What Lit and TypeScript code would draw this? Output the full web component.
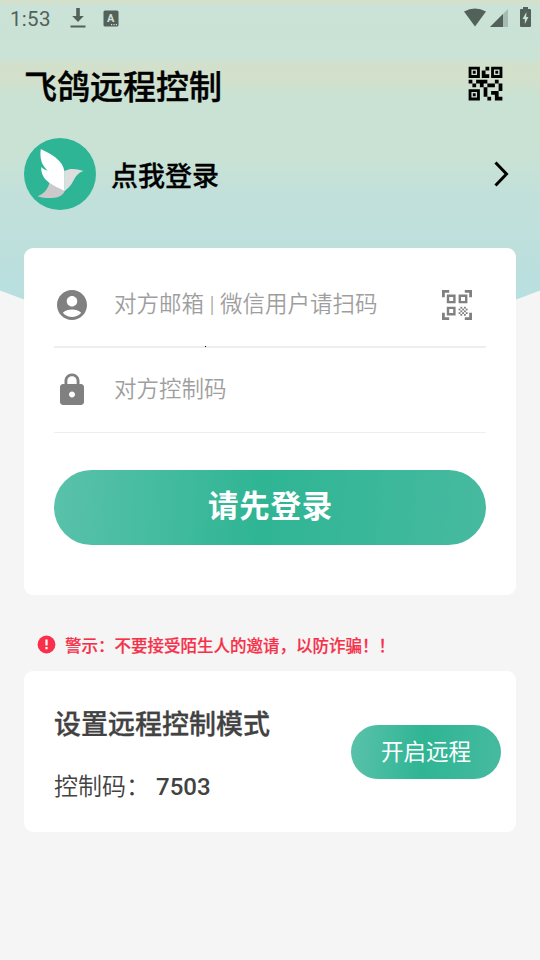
import { LitElement, html, css, svg } from "lit";
import { customElement } from "lit/decorators.js";

const hatch = ["01010", "10101", "01010", "10101", "01010"];

const qrIcon = html`<svg class="qr" viewBox="0 0 24 24">
  <path d="M15 21h-2v-2h2v2zm-2-7h-2v5h2v-5zm8-2h-2v4h2v-4zm-2-2h-2v2h2v-2zM7 12H5v2h2v-2zm-2-2H3v2h2v-2zm7-5h2V3h-2v2zm-7.5-.5v3h3v-3h-3zM9 9H3V3h6v6zm-4.5 7.5v3h3v-3h-3zM9 21H3v-6h6v6zm7.5-16.5v3h3v-3h-3zM21 9h-6V3h6v6zm-2 10v-3h-4v2h2v3h4v-2h-2zm-2-7h-4v2h4v-2zm-4-2H7v2h2v2h2v-2h2v-2zm1-1V7h-2V5h-2v4h4zM6.75 5.25h-1.5v1.5h1.5v-1.5zm0 12h-1.5v1.5h1.5v-1.5zm12-12h-1.5v1.5h1.5v-1.5z"/>
</svg>`;

const scanIcon = html`<svg class="scan" viewBox="0 0 30 30">
  <path class="line thick" d="M1.4 7.2V1.4H7.2M22.8 1.4H28.6V7.2M28.6 22.8V28.6H22.8M7.2 28.6H1.4V22.8"/>
  <path class="line" d="M6 5.7h6.4v6.4H6zM17.8 5.7h6.4v6.4h-6.4zM6 17.9h6.4v6.4H6z"/>
  ${svg`${hatch.flatMap((row, y) =>
    [...row].map((c, x) =>
      c === "1" ? svg`<rect x=${16.6 + x * 1.8} y=${16.8 + y * 1.8} width="1.8" height="1.8"/>` : null
    )
  )}`}
</svg>`;

@customElement("app-root")
export class AppRoot extends LitElement {
  static styles = css`
    :host {
      display: block;
      font-family: Roboto, "Noto Sans CJK SC", sans-serif;
      color: #000;
    }
    * { box-sizing: border-box; }
    svg { display: block; flex: none; }
    .page {
      position: relative;
      height: 960px;
      overflow: hidden;
      background: #f5f5f5;
      display: flex;
      flex-direction: column;
      padding: 0 24px;
      isolation: isolate;
    }
    .page::before {
      content: "";
      position: absolute;
      inset: 0 0 auto;
      height: 345px;
      z-index: -1;
      clip-path: circle(735px at 50% -393px);
      background: linear-gradient(180deg, #d4e0cb 0, #d3e0cc 4px, #cae2d7 5px, #cbe2d6 60px,
        #d3e0cb 63px, #d2e0cc 80px, #cae2d3 96px, #c9e2d4 155px, #c2e0da 195px, #bfe0dc 235px, #b8dfe0 300px);
    }
    .status {
      height: 36px;
      margin: 0 -24px;
      padding: 0 9.5px 0 10px;
      display: flex;
      align-items: center;
      color: #52615a;
      fill: #52615a;
    }
    .clock { font-size: 20.5px; line-height: 36px; width: 60px; padding-top: 2px; letter-spacing: .3px; }
    .spacer { flex: 1; }
    .download { width: 16px; height: 22px; margin: 0 17px 0 0; }
    .wifi { width: 22px; height: 19px; margin: -2px 4px 0 0; }
    .signal { width: 18px; height: 19px; margin: 0 12px 0 0; }
    .battery { width: 11px; height: 20px; margin-top: -2px; }
    .glyph { font: 700 11px Roboto, sans-serif; fill: #cfe2d8; }
    .titlebar {
      height: 48px;
      margin-top: 23px;
      display: flex;
      align-items: center;
      justify-content: space-between;
      padding-right: 8px;
    }
    .title { font-size: 33px; font-weight: 500; margin: 0; line-height: 48px; padding-top: 10px; -webkit-text-stroke: .4px; }
    .qr { width: 45px; height: 45px; }
    .login {
      height: 72px;
      margin-top: 31px;
      display: flex;
      align-items: center;
      padding-right: 6px;
    }
    .avatar { width: 72px; height: 72px; margin-right: 15px; }
    .login-text { font-size: 27px; font-weight: 500; flex: 1; line-height: 40px; padding-top: 5px; -webkit-text-stroke: .3px; }
    .chevron { width: 18px; height: 28px; }
    .card { background: #fff; border-radius: 9px; }
    .connect { margin-top: 37.5px; height: 347px; padding: 14.500px 30px 0; position: relative; }
    .field {
      height: 86px;
      border-bottom: 2px solid #eee;
      display: flex;
      align-items: center;
      color: #9e9e9e;
      font-size: 22.5px;
      font-weight: 350;
      padding-top: 1px;
    }
    .field + .field { border-bottom-width: 1px; height: 85px; padding-top: 0; }
    .field > span { flex: 1; padding-left: 24px; white-space: nowrap; padding-bottom: 6px; }
    .field + .field > span { padding-bottom: 6px; }
    .mark { width: 36px; height: 36px; fill: #808080; }
    .scan { width: 30px; height: 30px; margin-right: 14px; fill: #808080; }
    .line { fill: none; stroke: #808080; stroke-width: 2.4; }
    .thick { stroke-width: 2.8; }
    .speck { position: absolute; left: 181px; top: 98.500px; width: 1px; height: 1px; background: #000; }
    .pill {
      border: 0;
      font-family: inherit;
      color: #fff;
      display: block;
      background: linear-gradient(95deg, #5ac2aa 0%, #2fb594 48%, #34b697 60%, #47baa0 100%);
    }
    .primary {
      width: 432px;
      height: 75px;
      border-radius: 38px;
      margin-top: 37px;
      font-size: 30.5px;
      letter-spacing: .8px;
      font-weight: 700;
      padding: 0 0 7px 1px;
    }
    .warning {
      padding: 24px 0 0 13px;
      display: flex;
      align-items: center;
      height: 76.5px;
      color: #f5314a;
      font-size: 16.5px;
      font-weight: 500;
      white-space: nowrap;
      -webkit-text-stroke: .2px;
    }
    .alert { width: 19px; height: 19px; margin: -1px 9px 0 0; fill: #fb2f4b; }
    .mode {
      height: 161px;
      padding: 9px 15px 0 30px;
      display: flex;
      align-items: center;
      justify-content: space-between;
      color: #424242;
    }
    .mode h2 { font-size: 27px; font-weight: 500; line-height: 40px; margin: 0 0 22.5px; -webkit-text-stroke: .3px; }
    .code { font-size: 24px; font-weight: 350; line-height: 40px; }
    .code b { font-weight: 500; margin-left: 6px; }
    .secondary { width: 150px; height: 54px; border-radius: 27px; font-size: 22.5px; font-weight: 400; padding: 0 0 4px; margin-bottom: 9px; }
  `;

  render() {
    return html`
      <main class="page">
        <header class="status">
          <span class="clock">1:53</span>
          <svg class="download" viewBox="0 0 16 22">
            <path d="M6.2 1h3.6v8h4L8 15 2.200 9h4zM.5 18.500h15v2H.5z"/>
          </svg>
          <svg width="16" height="17" viewBox="0 0 16 17">
            <rect x=".5" y=".5" width="15" height="16" rx="1.5"/>
            <text class="glyph" x="4" y="12">A</text>
            <path fill="#cfe2d8" d="M8 14h1.200v1.200H8zM10.400 14h1.200v1.200h-1.200zM12.800 14h1.200v1.200h-1.200z"/>
          </svg>
          <span class="spacer"></span>
          <svg class="wifi" viewBox="0 0 22 19"><path d="M0 3.500Q11-2.500 22 3.500L11 18.500z"/></svg>
          <svg class="signal" viewBox="0 0 18 19">
            <path opacity=".3" d="M18 0v18H0z"/><path d="M13 5v13H0z"/>
          </svg>
          <svg class="battery" viewBox="0 0 11 20">
            <path fill-rule="evenodd" d="M3 0h5v2h2a1 1 0 0 1 1 1v16a1 1 0 0 1-1 1H1a1 1 0 0 1-1-1V3a1 1 0 0 1 1-1h2zM6.500 5L2.500 12h2.300v5L8.500 10H6.200z"/>
          </svg>
        </header>

        <div class="titlebar">
          <h1 class="title">飞鸽远程控制</h1>
          ${qrIcon}
        </div>

        <div class="login">
          <svg class="avatar" viewBox="0 0 72 72">
            <circle cx="36" cy="36" r="36" fill="#2db596"/>
            <path fill="#ccc9cc" d="M25.500 44C24.500 50.500 20 56 13.500 58.200C20 60.500 29 60.500 34 59C38 57.500 40.500 55 41 52L33 45z"/>
            <path fill="#dedede" d="M40.500 33C46 30 52 30.500 59.500 33C53.500 35 51.500 39 49.500 42.500C47 47.500 44 50.500 40.500 53z"/>
            <path fill="#fff" d="M16.800 11C27 16 39 22 40.500 33.500V53C36 50 30 48.500 25 44.500C20 41 17 36 17.200 29C19 31 21 32 23.500 32.500C17.500 27 15.500 20 16.800 11z"/>
          </svg>
          <span class="login-text">点我登录</span>
          <svg class="chevron" viewBox="0 0 18 28">
            <path fill="none" stroke="#000" stroke-width="3" d="M3.500 2.500L14.500 14L3.500 25.500"/>
          </svg>
        </div>

        <section class="card connect">
          <div class="field">
            <svg class="mark" viewBox="0 0 24 24">
              <path d="M12 2C6.480 2 2 6.480 2 12s4.480 10 10 10 10-4.480 10-10S17.520 2 12 2zm0 4c1.930 0 3.500 1.570 3.500 3.500S13.930 13 12 13s-3.500-1.570-3.500-3.500S10.070 6 12 6zm0 14c-2.030 0-4.430-.82-6.140-2.880C7.550 15.800 9.680 15 12 15s4.450.8 6.140 2.120C16.430 19.180 14.030 20 12 20z"/>
            </svg>
            <span>对方邮箱 | 微信用户请扫码</span>
            ${scanIcon}
          </div>
          <div class="field">
            <svg class="mark" viewBox="0 0 24 24">
              <path d="M18 8h-1V6c0-2.760-2.240-5-5-5S7 3.240 7 6v2H6c-1.100 0-2 .9-2 2v10c0 1.100.9 2 2 2h12c1.100 0 2-.9 2-2V10c0-1.100-.9-2-2-2zm-6 9c-1.100 0-2-.9-2-2s.9-2 2-2 2 .9 2 2-.9 2-2 2zm3.100-9H8.900V6c0-1.710 1.390-3.100 3.100-3.100s3.100 1.390 3.100 3.100v2z"/>
            </svg>
            <span>对方控制码</span>
          </div>
          <i class="speck"></i>
          <button class="pill primary">请先登录</button>
        </section>

        <div class="warning">
          <svg class="alert" viewBox="0 0 19 19">
            <circle cx="9.500" cy="9.500" r="8.900"/>
            <path fill="#fff" d="M8.400 4.500h2.200v6H8.400zM8.400 12h2.200v2.200H8.400z"/>
          </svg>
          <span>警示：不要接受陌生人的邀请，以防诈骗！！</span>
        </div>

        <section class="card mode">
          <div>
            <h2>设置远程控制模式</h2>
            <div class="code">控制码：<b>7503</b></div>
          </div>
          <button class="pill secondary">开启远程</button>
        </section>
      </main>
    `;
  }
}
